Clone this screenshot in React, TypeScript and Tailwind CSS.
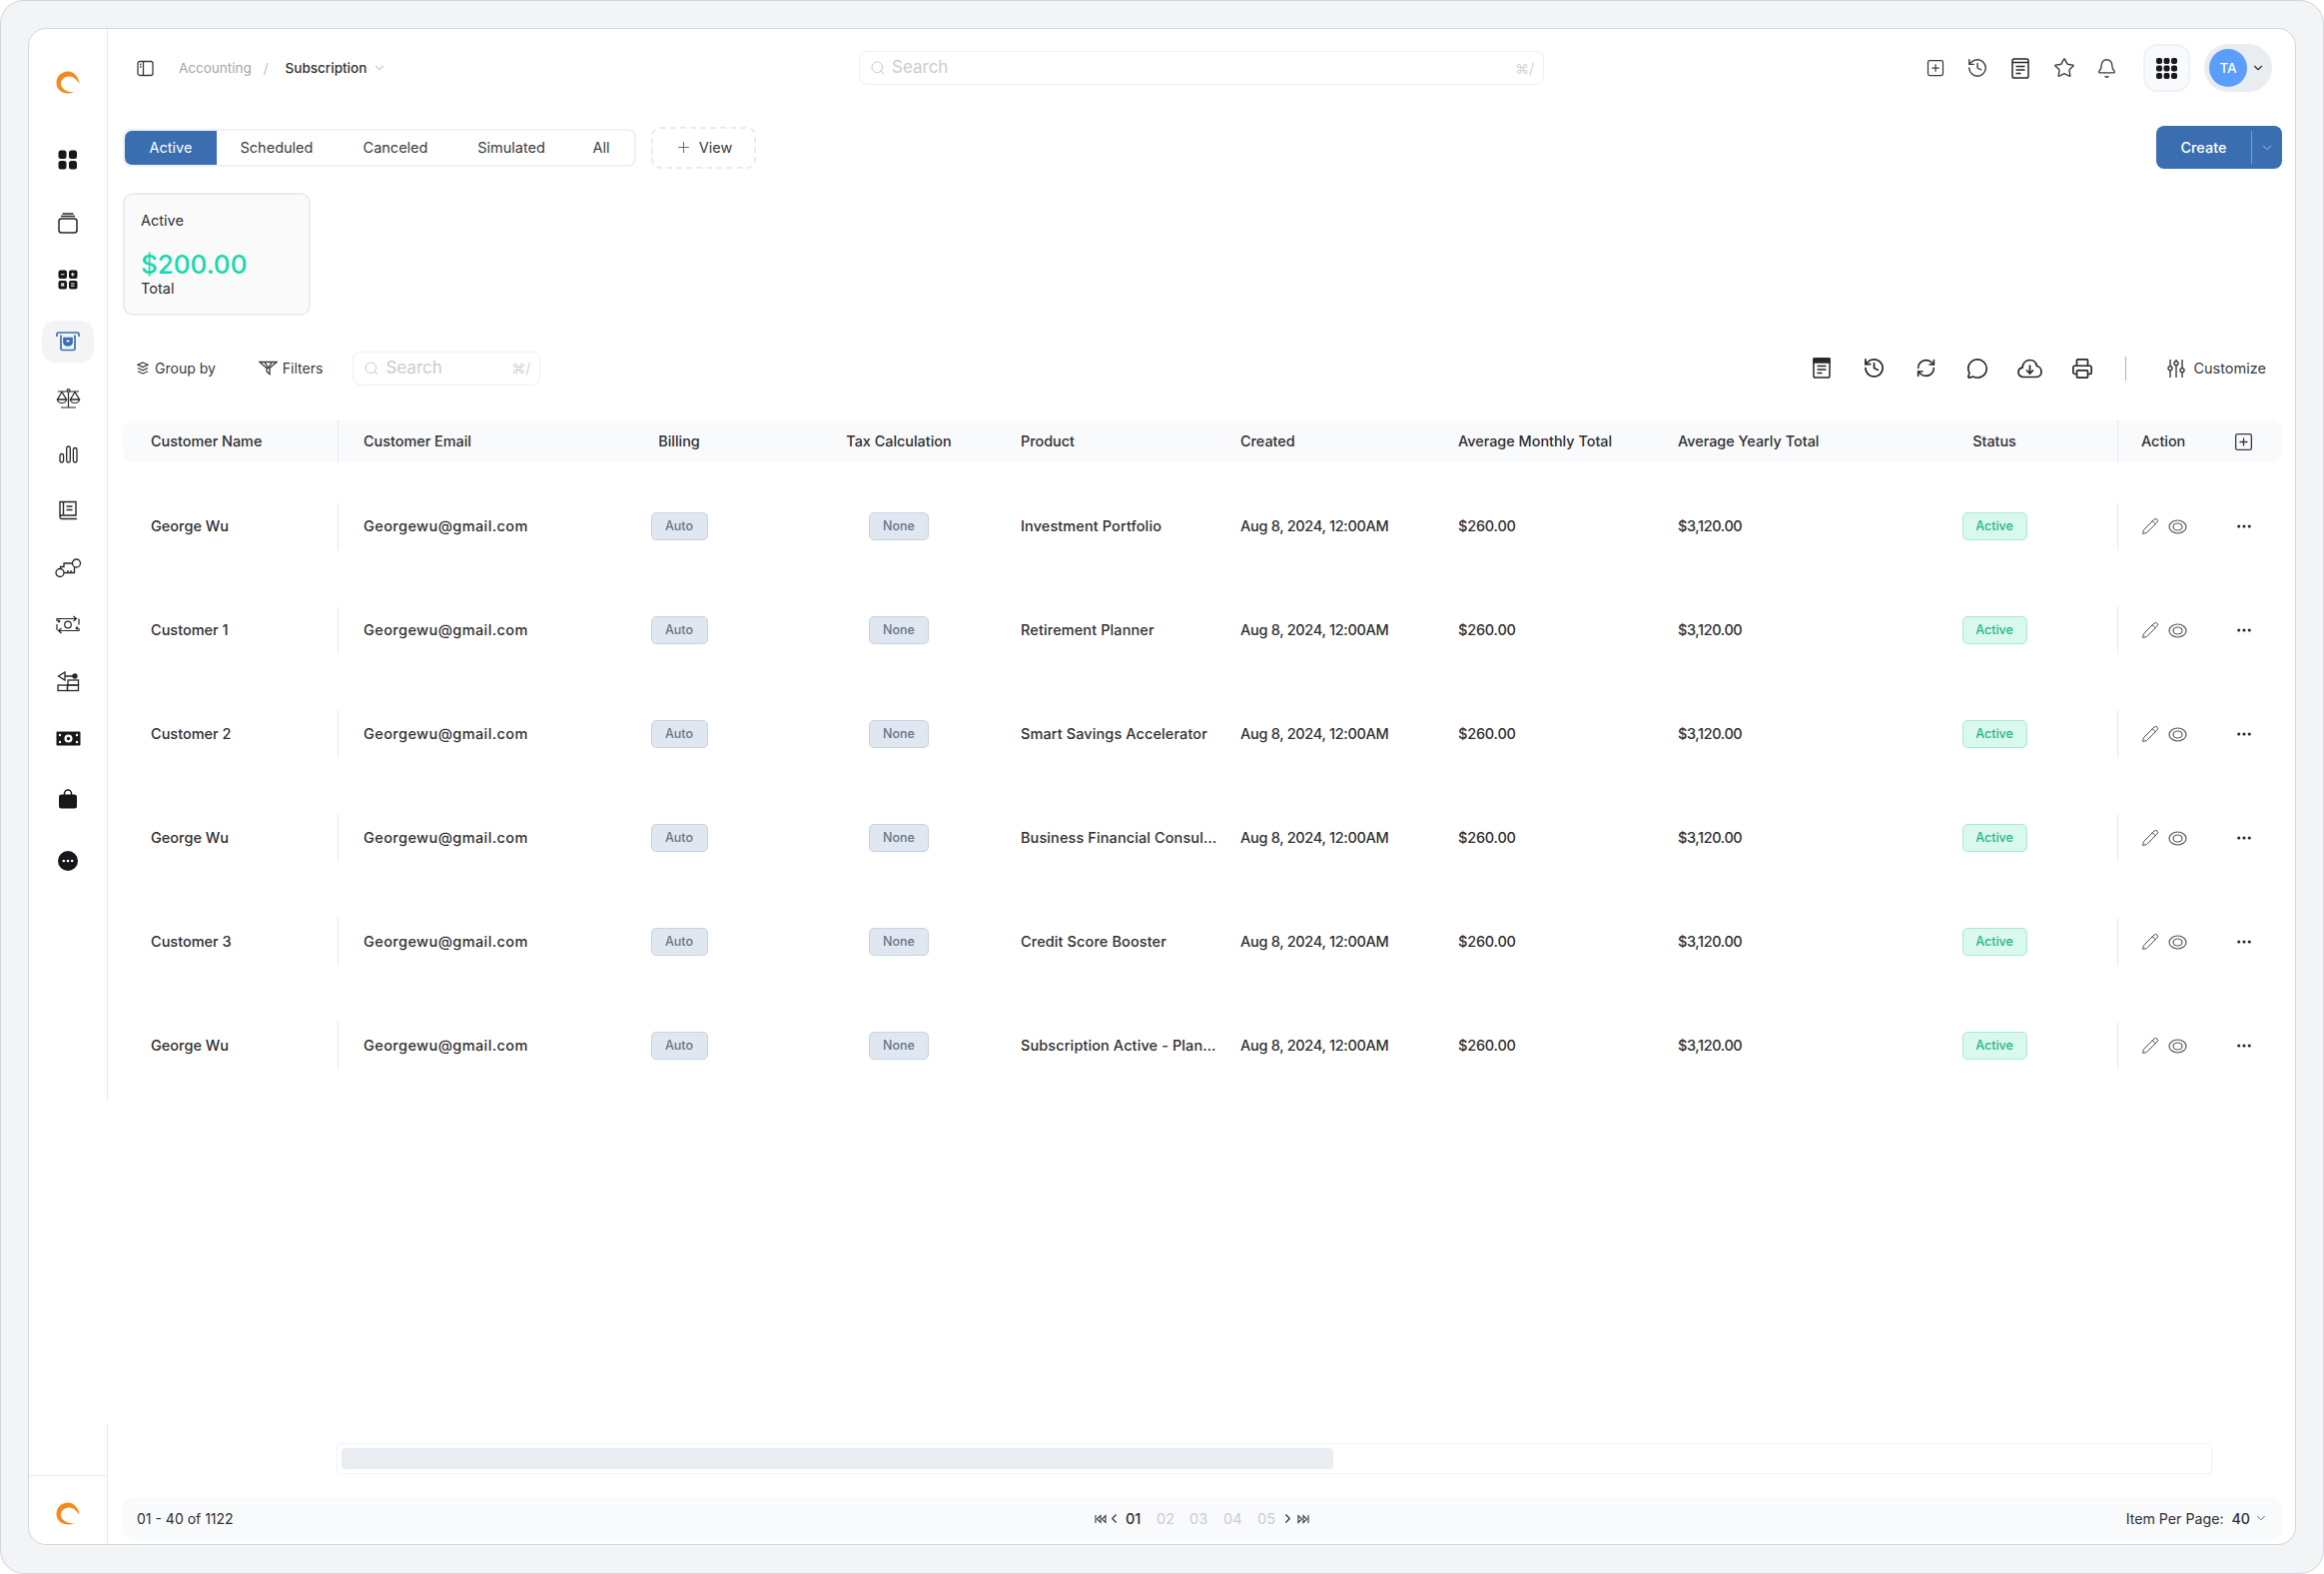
import {
  Bell,
  ChevronDown,
  ChevronLeft,
  ChevronRight,
  Ellipsis,
  History,
  MessageCircle,
  Pencil,
  Plus,
  Printer,
  RefreshCw,
  Search,
  SquarePlus,
  Star,
} from "lucide-react";

const rows = [
  { name: "George Wu", product: "Investment Portfolio" },
  { name: "Customer 1", product: "Retirement Planner" },
  { name: "Customer 2", product: "Smart Savings Accelerator" },
  { name: "George Wu", product: "Business Financial Consulting" },
  { name: "Customer 3", product: "Credit Score Booster" },
  { name: "George Wu", product: "Subscription Active - Plan Premium" },
];

const gridCols =
  "grid grid-cols-[216px_231px_220px_220px_220px_218px_220px_206px_246px_164px] items-center";

function Logo() {
  return (
    <svg width="24" height="23" viewBox="0 0 24 23" fill="#f58a1f">
      <path d="M23.5 13C23 6 18 0.5 12 0.5C5.5 0.5 0.5 5.5 0.5 12C0.5 18 5.5 22.5 12 22.5C14 22.5 16 22 18 21C11 21.5 5 18 5 12.5C5 8.5 9 5.5 13 5.5C17.5 5.5 21 9 23.5 13Z" />
    </svg>
  );
}

function DashIcon() {
  return (
    <svg width="20" height="20" viewBox="0 0 20 20" fill="#17171c">
      <rect x="0.5" y="0.5" width="8" height="8.5" rx="2.5" />
      <rect x="11" y="0.5" width="8" height="8.5" rx="2.5" />
      <rect x="0.5" y="11" width="8" height="8.5" rx="2.5" />
      <rect x="11" y="11" width="8" height="8.5" rx="2.5" />
    </svg>
  );
}

function StackIcon() {
  return (
    <svg width="20" height="21" viewBox="0 0 20 21" fill="none" stroke="#26262b" strokeWidth="1.5">
      <path d="M4.5 1h11M3 3.5h14" />
      <rect x="1" y="6" width="18" height="14" rx="2.5" />
    </svg>
  );
}

function CalcIcon() {
  return (
    <svg width="20" height="20" viewBox="0 0 20 20">
      <rect x="0.5" y="0.5" width="8.5" height="8.5" rx="2" fill="#17171c" />
      <rect x="11" y="0.5" width="8.5" height="8.5" rx="2" fill="#17171c" />
      <rect x="0.5" y="11" width="8.5" height="8.5" rx="2" fill="#17171c" />
      <rect x="11" y="11" width="8.5" height="8.5" rx="2" fill="#17171c" />
      <path
        d="M3 4.8h3.5M13 4.8h3.5M14.8 3v3.5M3.2 13.5l3 3M6.2 13.5l-3 3M13 14h3.5M13 16.3h3.5"
        stroke="#fff"
        strokeWidth="1.1"
      />
    </svg>
  );
}

function AtmIcon() {
  return (
    <svg width="24" height="20" viewBox="0 0 24 20" fill="none" stroke="#3b6eb0" strokeWidth="1.7">
      <path d="M1 5V2.5C1 1.5 1.5 1 2.5 1h19c1 0 1.5.5 1.5 1.5V5" />
      <path d="M5 3.5V17c0 1 .5 1.5 1.5 1.5h11c1 0 1.5-.5 1.5-1.5V3.5" />
      <path d="M8 6.5h8V11a4 3 0 0 1-8 0z" fill="#3b6eb0" />
      <path d="M10.5 9.5h3" stroke="#fff" />
    </svg>
  );
}

function ScaleIcon() {
  return (
    <svg width="25" height="20" viewBox="0 0 25 20" fill="none" stroke="#26262b" strokeWidth="1.2">
      <circle cx="12.5" cy="2" r="1.4" />
      <path d="M2 3h9M14 3h9M12.5 3.5V18.5M5 19h15" />
      <path d="M6 3.5 1.5 11h9zM19 3.5 14.5 11h9z" />
      <path d="M1.5 11a4.5 3.5 0 0 0 9 0zM14.5 11a4.5 3.5 0 0 0 9 0z" />
    </svg>
  );
}

function BarsIcon() {
  return (
    <svg width="19" height="18" viewBox="0 0 19 18" fill="none" stroke="#26262b" strokeWidth="1.3">
      <rect x="1" y="8.5" width="3.6" height="8.5" rx="1.8" />
      <rect x="7.7" y="1" width="3.6" height="16" rx="1.8" />
      <rect x="14.4" y="2.5" width="3.6" height="14.5" rx="1.8" />
    </svg>
  );
}

function BookIcon() {
  return (
    <svg width="20" height="20" viewBox="0 0 20 20" fill="none" stroke="#26262b" strokeWidth="1.4">
      <path d="M2 16V1.5h16V15H3.5A1.8 1.8 0 0 0 2 16.8c0 1 .7 1.7 1.7 1.7H19" />
      <path d="M5.5 2v12.5M8.5 6h6M8.5 9.5h6" />
    </svg>
  );
}

function KeysIcon() {
  return (
    <svg width="27" height="20" viewBox="0 0 27 20" fill="none" stroke="#26262b" strokeWidth="1.3">
      <circle cx="5" cy="14.5" r="4" />
      <circle cx="21.5" cy="5" r="4" />
      <path d="M17.5 5H9v3.5H5.5v2M9 14.5h10.5v-6M13 14.5V12M16 14.5V12" />
    </svg>
  );
}

function CashLineIcon() {
  return (
    <svg width="26" height="19" viewBox="0 0 26 19" fill="none" stroke="#26262b" strokeWidth="1.2">
      <path d="M2 6V3.5h19M18.5 1l3 2.5-3 2.5M24 13v2.5H4M6.5 13l-3 2.5 3 2.5M2 9v6M24 3.5v6" />
      <circle cx="13" cy="9.5" r="3.3" />
      <circle cx="22" cy="13" r=".8" />
      <circle cx="4" cy="6" r=".8" />
    </svg>
  );
}

function BalanceIcon() {
  return (
    <svg width="23" height="21" viewBox="0 0 23 21" fill="none" stroke="#26262b" strokeWidth="1.3">
      <path d="M1.5 5 8 1v8zM8 5h12" />
      <circle cx="18" cy="5" r="2" fill="#26262b" />
      <rect x="11" y="9" width="10.5" height="5" />
      <rect x="1" y="14" width="9.5" height="5.5" />
      <rect x="10.5" y="14" width="11" height="5.5" />
    </svg>
  );
}

function CashFillIcon() {
  return (
    <svg width="25" height="17" viewBox="0 0 25 17">
      <rect x="0.5" y="1.5" width="24" height="14" rx="1" fill="#17171c" />
      <circle cx="12.5" cy="8.5" r="4" fill="#fff" />
      <circle cx="12.5" cy="8.5" r="1.7" fill="#17171c" />
      <circle cx="4" cy="5" r="1.2" fill="#fff" />
      <circle cx="21" cy="5" r="1.2" fill="#fff" />
      <circle cx="4" cy="12" r="1.2" fill="#fff" />
      <circle cx="21" cy="12" r="1.2" fill="#fff" />
    </svg>
  );
}

function BagIcon() {
  return (
    <svg width="20" height="20" viewBox="0 0 20 20">
      <path d="M6.5 6V4.5a3.5 3.5 0 0 1 7 0V6" fill="none" stroke="#17171c" strokeWidth="1.5" />
      <rect x="1" y="5.5" width="18" height="14" rx="2.5" fill="#17171c" />
    </svg>
  );
}

function DotsCircleIcon() {
  return (
    <svg width="20" height="20" viewBox="0 0 20 20">
      <circle cx="10" cy="10" r="10" fill="#17171c" />
      <circle cx="5.8" cy="10" r="1.3" fill="#fff" />
      <circle cx="10" cy="10" r="1.3" fill="#fff" />
      <circle cx="14.2" cy="10" r="1.3" fill="#fff" />
    </svg>
  );
}

function DocIcon({ fillTop }: { fillTop?: boolean }) {
  return (
    <svg width="18" height="21" viewBox="0 0 18 21" fill="none" stroke="#26262b" strokeWidth="1.5">
      <rect x="1" y="1" width="16" height="19" rx="1.8" />
      {fillTop && <rect x="1" y="1" width="16" height="4" fill="#26262b" />}
      {!fillTop && <path d="M1 4.5h16" />}
      <path d="M4.5 8.5h9M4.5 12h9M4.5 15.5h5" />
    </svg>
  );
}

function CloudIcon() {
  return (
    <svg width="25" height="20" viewBox="0 0 25 20" fill="none" stroke="#26262b" strokeWidth="1.7">
      <path d="M6 18.5C3 18.5 1 16.5 1 13.8C1 11.3 2.8 9.5 5 9.2C5.5 4.5 8.5 1.5 12.5 1.5C16 1.5 18.8 4 19.5 7.5C22 8 24 10.5 24 13.3C24 16.3 22 18.5 19 18.5Z" />
      <path d="M12.5 6.5v8M9 11.5l3.5 3.5 3.5-3.5" />
    </svg>
  );
}

function EyeIcon() {
  return (
    <svg width="19" height="15" viewBox="0 0 19 15" fill="none" stroke="#55585f" strokeWidth="1.2">
      <ellipse cx="9.5" cy="7.5" rx="8.5" ry="6.5" />
      <ellipse cx="9.5" cy="7.5" rx="4.5" ry="3.5" />
    </svg>
  );
}

function GridDots() {
  const dots = [];
  for (let r = 0; r < 3; r++) {
    for (let c = 0; c < 3; c++) {
      dots.push(<rect key={`${r}-${c}`} x={c * 7.5} y={r * 7.5} width="6" height="6" rx="2" fill="#17171c" />);
    }
  }
  return (
    <svg width="21" height="21" viewBox="0 0 21 21">
      {dots}
    </svg>
  );
}

function PanelIcon() {
  return (
    <svg width="17" height="17" viewBox="0 0 17 17" fill="none" stroke="#3a3a40" strokeWidth="1.3">
      <rect x="1" y="1.5" width="15" height="14" rx="2" />
      <path d="M6.5 1.5v14" />
      <path d="M3 4.5h1.5M3 7h1.5" />
    </svg>
  );
}

function GroupIcon() {
  return (
    <svg width="12" height="14" viewBox="0 0 12 14" fill="none" stroke="#3a3a40" strokeWidth="1.2">
      <path d="M6 1l5 2.2-5 2.3L1 3.2zM1 6.5l5 2.3 5-2.3M1 9.8l5 2.4 5-2.4" />
    </svg>
  );
}

function FilterIcon() {
  return (
    <svg width="19" height="15" viewBox="0 0 19 15" fill="none" stroke="#3a3a40" strokeWidth="1.3">
      <path d="M1 1.5h17l-7 6v6l-3-2.500V7.500zM6 1.500l3.500 6 4-6" />
    </svg>
  );
}

function SlidersIcon() {
  return (
    <svg width="18" height="20" viewBox="0 0 18 20" fill="none" stroke="#3a3a40" strokeWidth="1.4">
      <path d="M3 1v6.500M3 12v7M9 1v1.500M9 7v12M15 1v8.500M15 14v5" />
      <circle cx="3" cy="9.8" r="2" />
      <circle cx="9" cy="4.8" r="2" />
      <circle cx="15" cy="11.8" r="2" />
    </svg>
  );
}

function SkipIcon({ flip }: { flip?: boolean }) {
  return (
    <svg width="12" height="10" viewBox="0 0 12 10" fill="none" stroke="#3a3a40" strokeWidth="1.1" className={flip ? "rotate-180" : ""}>
      <path d="M1 1v8M6 1.500 2.500 5 6 8.500zM11 1.500 7.500 5l3.500 3.500z" />
    </svg>
  );
}

function SideItem({ h, active, children }: { h: string; active?: boolean; children: React.ReactNode }) {
  return (
    <div className={`flex items-center justify-center ${h}`}>
      <div className={`flex h-[42px] w-[52px] items-center justify-center rounded-[14px] ${active ? "bg-[#f3f4f6]" : ""}`}>
        {children}
      </div>
    </div>
  );
}

export default function App() {
  return (
    <div className="h-screen w-full overflow-hidden bg-white font-['Inter',sans-serif] text-[#2f2f33]">
      <div className="h-full w-full rounded-[24px] border border-[#cfd6df] bg-[#f3f4f6] pt-[27px] pr-[27px] pb-[28px] pl-[27px]">
        <div className="flex h-full w-full rounded-[18px] border border-[#cfd6df] bg-white">
          <aside className="flex w-[79px] shrink-0 flex-col">
            <div className="h-[1073px] border-r border-[#e5e9f0]">
              <div className="flex h-[106px] items-center justify-center">
                <Logo />
              </div>
              <div className="flex h-[50px] items-center justify-center">
                <DashIcon />
              </div>
              <div className="mt-[13px] flex h-[50px] items-center justify-center">
                <StackIcon />
              </div>
              <div className="mt-[7px] flex h-[50px] items-center justify-center">
                <CalcIcon />
              </div>
              <SideItem h="h-[56px] mt-[9px]" active>
                <AtmIcon />
              </SideItem>
              <SideItem h="h-[56px] mt-[1px]">
                <ScaleIcon />
              </SideItem>
              <SideItem h="h-[56px]">
                <BarsIcon />
              </SideItem>
              <SideItem h="h-[56px]">
                <BookIcon />
              </SideItem>
              <SideItem h="h-[56px] mt-[2px]">
                <KeysIcon />
              </SideItem>
              <SideItem h="h-[56px]">
                <CashLineIcon />
              </SideItem>
              <SideItem h="h-[56px] mt-[1px]">
                <BalanceIcon />
              </SideItem>
              <SideItem h="h-[56px] mt-[1px]">
                <CashFillIcon />
              </SideItem>
              <SideItem h="h-[56px] mt-[5px]">
                <BagIcon />
              </SideItem>
              <SideItem h="h-[56px] mt-[6px]">
                <DotsCircleIcon />
              </SideItem>
            </div>
            <div className="flex-1" />
            <div className="h-[120px] border-r border-[#e5e9f0]">
              <div className="h-[52px] border-b border-[#e5e9f0]" />
              <div className="flex h-[68px] items-center justify-center pt-[6px]">
                <Logo />
              </div>
            </div>
          </aside>

          <main className="flex min-w-0 flex-1 flex-col pr-[13px] pl-[15px]">
            <header className="flex h-[77px] items-center pt-[1px]">
              <div className="flex w-[737px] items-center pl-[14px] text-[13.5px]">
                <PanelIcon />
                <span className="ml-[25px] text-[#a3a6ad]">Accounting</span>
                <span className="ml-[12px] text-[#b9bcc2]">/</span>
                <span className="ml-[17px] font-medium text-[#2f2f33]">Subscription</span>
                <ChevronDown size={14} className="ml-[6px] text-[#9a9da4]" strokeWidth={1.5} />
              </div>
              <div className="flex h-[34px] w-[686px] items-center rounded-[8px] border border-[#eef0f4] pr-[9px] pl-[10px]">
                <Search size={16} strokeWidth={1.5} className="text-[#c5c8ce]" />
                <span className="ml-[6px] flex-1 text-[17px] text-[#c9ccd2]">Search</span>
                <span className="text-[14px] text-[#cfd2d7]">⌘/</span>
              </div>
              <div className="ml-auto flex items-center pr-[10px]">
                <div className="flex items-center">
                  <SquarePlus size={20} strokeWidth={1.5} color="#3a3a40" />
                  <History size={22} strokeWidth={1.5} color="#3a3a40" className="ml-[21px]" />
                  <div className="ml-[23px]">
                    <DocIcon />
                  </div>
                  <Star size={22} strokeWidth={1.5} color="#3a3a40" className="ml-[24px]" />
                  <Bell size={21} strokeWidth={1.5} color="#3a3a40" className="ml-[21px]" />
                </div>
                <div className="ml-[26px] flex h-[48px] w-[47px] items-center justify-center rounded-[14px] border-2 border-[#eef1f6] bg-[#f9fafb]">
                  <GridDots />
                </div>
                <div className="ml-[14px] flex h-[48px] w-[68px] items-center rounded-full bg-[#e9edf2] pl-[5px]">
                  <div className="flex h-[38px] w-[38px] items-center justify-center rounded-full bg-[#5a9dfa] text-[13.5px] font-medium text-white">
                    TA
                  </div>
                  <ChevronDown size={14} strokeWidth={2} className="ml-[4px] text-[#2f2f33]" />
                </div>
              </div>
            </header>

            <div className="mt-[20px] flex items-center justify-between">
              <div className="flex items-center">
                <div className="flex h-[38px] w-[514px] rounded-[8px] border-2 border-[#eef1f6] text-[14.5px] text-[#3a3a40]">
                  <div className="flex w-[92px] items-center justify-center rounded-l-[7px] bg-[#3b6eb0] text-white">Active</div>
                  <div className="flex w-[120px] items-center justify-center">Scheduled</div>
                  <div className="flex w-[118px] items-center justify-center">Canceled</div>
                  <div className="flex w-[114px] items-center justify-center">Simulated</div>
                  <div className="flex w-[66px] items-center justify-center">All</div>
                </div>
                <div className="ml-[15px] flex h-[42px] w-[105px] items-center justify-center gap-[7px] rounded-[9px] border-2 border-dashed border-[#e8ebf1] text-[14.5px] text-[#3a3a40]">
                  <Plus size={17} strokeWidth={1.5} color="#6b6e75" />
                  View
                </div>
              </div>
              <div className="flex h-[43px] w-[126px] items-center rounded-[8px] bg-[#3b6eb0] text-[14.5px] font-medium text-white">
                <div className="flex w-[95px] items-center justify-center">Create</div>
                <div className="flex h-[33px] flex-1 items-center justify-center border-l border-[#7d9ecb]">
                  <ChevronDown size={14} strokeWidth={1.5} className="text-[#b8cbe4]" />
                </div>
              </div>
            </div>

            <div className="mt-[24px] h-[123px] w-[188px] rounded-[10px] border-2 border-[#e8edf5] bg-[#fafafa] pt-[16px] pl-[16px]">
              <div className="text-[14.5px] leading-[20px]">Active</div>
              <div className="mt-[18px] text-[26px] leading-[32px] font-medium text-[#14d9b0]">$200.00</div>
              <div className="text-[14.5px] leading-[16px]">Total</div>
            </div>

            <div className="mt-[35px] flex h-[35px] items-center">
              <div className="flex items-center pl-[14px] text-[14px] text-[#3a3a40]">
                <GroupIcon />
                <span className="ml-[6px]">Group by</span>
                <div className="ml-[43px]">
                  <FilterIcon />
                </div>
                <span className="ml-[5px]">Filters</span>
              </div>
              <div className="ml-[30px] flex h-[34px] w-[188px] items-center rounded-[8px] border border-[#eef0f4] pr-[9px] pl-[10px]">
                <Search size={16} strokeWidth={1.5} className="text-[#c5c8ce]" />
                <span className="ml-[6px] flex-1 text-[17px] text-[#c9ccd2]">Search</span>
                <span className="text-[14px] text-[#cfd2d7]">⌘/</span>
              </div>
              <div className="ml-auto flex items-center pr-[16px]">
                <DocIcon fillTop />
                <History size={23} strokeWidth={1.8} color="#26262b" className="ml-[32px]" />
                <RefreshCw size={21} strokeWidth={1.8} color="#26262b" className="ml-[30px]" />
                <MessageCircle size={22} strokeWidth={1.8} color="#26262b" className="ml-[30px]" />
                <div className="ml-[29px]">
                  <CloudIcon />
                </div>
                <Printer size={22} strokeWidth={1.8} color="#26262b" className="ml-[29px]" />
                <div className="ml-[32px] h-[24px] w-[1px] bg-[#9db2d0]" />
                <div className="ml-[41px]">
                  <SlidersIcon />
                </div>
                <span className="ml-[8px] text-[14.5px] text-[#3a3a40]">Customize</span>
              </div>
            </div>

            <div className={`${gridCols} mt-[35px] h-[42px] rounded-[12px] bg-[#f9fafb] text-[14.4px] font-medium text-[#2f2f33]`}>
              <div className="flex h-full items-center border-r border-[#e5e9f0] pl-[28px]">Customer Name</div>
              <div className="pl-[25px]">Customer Email</div>
              <div className="text-center">Billing</div>
              <div className="text-center">Tax Calculation</div>
              <div className="pl-[12px]">Product</div>
              <div className="pl-[12px]">Created</div>
              <div className="pl-[12px]">Average Monthly Total</div>
              <div className="pl-[12px]">Average Yearly Total</div>
              <div className="flex h-full items-center justify-center">Status</div>
              <div className="flex h-full items-center border-l border-[#e5e9f0] pl-[23px]">
                <span>Action</span>
                <SquarePlus size={21} strokeWidth={1.5} color="#3a3a40" className="ml-[48px]" />
              </div>
            </div>

            <div className="mt-[12px]">
              {rows.map((row, i) => (
                <div key={i} className={`${gridCols} h-[104px] text-[14.5px] font-medium text-[#2f2f33]`}>
                  <div className="flex h-[48px] items-center border-r border-[#e5e9f0] pl-[28px]">{row.name}</div>
                  <div className="pl-[25px] tracking-[0.4px]">Georgewu@gmail.com</div>
                  <div className="flex justify-center">
                    <span className="flex h-[28px] w-[57px] items-center justify-center rounded-[5px] border border-[#c8d2e1] bg-[#e1e7f0] text-[12.5px] text-[#64748b]">
                      Auto
                    </span>
                  </div>
                  <div className="flex justify-center">
                    <span className="flex h-[28px] w-[60px] items-center justify-center rounded-[5px] border border-[#c8d2e1] bg-[#e1e7f0] text-[12.5px] text-[#64748b]">
                      None
                    </span>
                  </div>
                  <div className="truncate pr-[10px] pl-[12px] tracking-[0.1px]">{row.product}</div>
                  <div className="pl-[12px] tracking-[-0.3px]">Aug 8, 2024, 12:00AM</div>
                  <div className="pl-[12px] tracking-[-0.2px]">$260.00</div>
                  <div className="pl-[12px] tracking-[-0.4px]">$3,120.00</div>
                  <div className="flex justify-center">
                    <span className="flex h-[28px] w-[65px] items-center justify-center rounded-[5px] border border-[#a6ebd3] bg-[#d9f8ee] text-[12.5px] text-[#25b58a]">
                      Active
                    </span>
                  </div>
                  <div className="flex h-[48px] items-center border-l border-[#e5e9f0] pl-[23px]">
                    <Pencil size={18} strokeWidth={1.3} color="#44464c" />
                    <div className="ml-[9px]">
                      <EyeIcon />
                    </div>
                    <Ellipsis size={18} strokeWidth={2.2} color="#26262b" className="ml-[48px]" />
                  </div>
                </div>
              ))}
            </div>

            <div className="mt-auto pl-[214px]">
              <div className="flex h-[31px] w-[1878px] items-center rounded-[4px] border border-[#f0f2f6] pl-[4px]">
                <div className="h-[21px] w-[993px] rounded-[4px] bg-[#e9edf2]" />
              </div>
            </div>

            <footer className="relative mt-[23px] mb-[4px] flex h-[43px] items-center justify-between rounded-[12px] bg-[#f9fafb] px-[14px] text-[14.2px] text-[#2f2f33]">
              <span className="text-[14px]">01 - 40 of 1122</span>
              <div className="absolute left-[973px] flex items-center text-[14.5px]">
                <SkipIcon />
                <ChevronLeft size={15} strokeWidth={1.8} />
                <span className="ml-[4px] w-[15px] font-medium">01</span>
                <span className="ml-[16px] w-[18px] text-[#c9ccd2]">02</span>
                <span className="ml-[15px] w-[18px] text-[#c9ccd2]">03</span>
                <span className="ml-[16px] w-[18px] text-[#c9ccd2]">04</span>
                <span className="ml-[16px] w-[18px] text-[#c9ccd2]">05</span>
                <ChevronRight size={15} strokeWidth={1.8} className="ml-[5px]" />
                <span className="ml-[2px]">
                  <SkipIcon flip />
                </span>
              </div>
              <div className="flex items-center">
                <span>Item Per Page:</span>
                <span className="ml-[8px] font-medium">40</span>
                <ChevronDown size={14} strokeWidth={1.5} className="ml-[4px] text-[#55585f]" />
              </div>
            </footer>
          </main>
        </div>
      </div>
    </div>
  );
}
